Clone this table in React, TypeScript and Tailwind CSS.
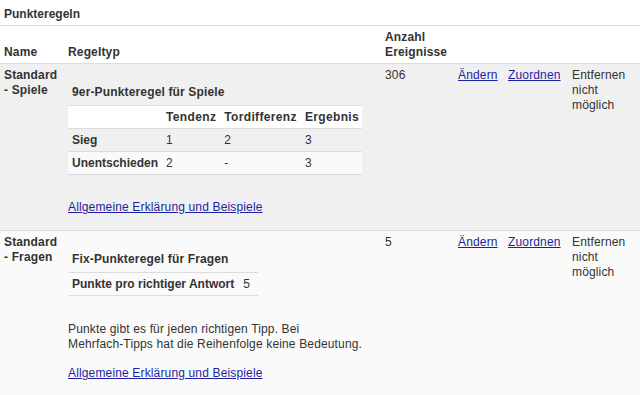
import React from "react";

const linkCls = "text-[#1f1fa3] underline";

type Rule = {
  name: string;
  title: string;
  count: string;
  kind: "spiele" | "fragen";
};

const rules: Rule[] = [
  { name: "Standard - Spiele", title: "9er-Punkteregel für Spiele", count: "306", kind: "spiele" },
  { name: "Standard - Fragen", title: "Fix-Punkteregel für Fragen", count: "5", kind: "fragen" },
];

const SpieleTable = () => (
  <table className="border-collapse">
    <thead>
      <tr className="bg-white border-y border-[#dcdcdc] tracking-[0.35px]">
        <th className="px-1 pt-1 pb-[3px] text-left font-bold"></th>
        <th className="px-1 pt-1 pb-[3px] text-left font-bold">Tendenz</th>
        <th className="px-1 pt-1 pb-[3px] text-left font-bold">Tordifferenz</th>
        <th className="pl-1 pr-[3px] pt-1 pb-[3px] text-left font-bold">Ergebnis</th>
      </tr>
    </thead>
    <tbody>
      <tr className="border-b border-[#dcdcdc]">
        <th className="px-1 pt-1 pb-[3px] text-left font-bold tracking-normal">Sieg</th>
        <td className="px-1 pt-1 pb-[3px]">1</td>
        <td className="px-1 pt-1 pb-[3px]">2</td>
        <td className="px-1 pt-1 pb-[3px]">3</td>
      </tr>
      <tr className="border-b border-[#dcdcdc] bg-[#fafafa]">
        <th className="px-1 pt-1 pb-[3px] text-left font-bold tracking-normal">Unentschieden</th>
        <td className="px-1 pt-1 pb-[3px]">2</td>
        <td className="px-1 pt-1 pb-[3px]">-</td>
        <td className="px-1 pt-1 pb-[3px]">3</td>
      </tr>
    </tbody>
  </table>
);

const FragenTable = () => (
  <table className="border-collapse">
    <tbody>
      <tr className="border-y border-[#dcdcdc]">
        <th className="pl-1 pr-[5px] pt-1 pb-[3px] text-left font-bold tracking-normal">
          Punkte pro richtiger Antwort
        </th>
        <td className="pl-1 pr-2 pt-1 pb-[3px]">5</td>
      </tr>
    </tbody>
  </table>
);

export default function App() {
  return (
    <div className="w-full bg-white font-['Liberation_Sans',Arial,sans-serif] text-[12px] leading-[15px] tracking-[0.15px] text-[#333]">
      <div className="h-[26px] border-b border-[#dcdcdc] px-1 pt-[7px] font-bold tracking-normal">Punkteregeln</div>
      <table className="w-full table-fixed border-collapse">
        <colgroup>
          <col className="w-[64px]" />
          <col className="w-[317px]" />
          <col className="w-[73px]" />
          <col className="w-[50px]" />
          <col className="w-[64px]" />
          <col />
        </colgroup>
        <thead>
          <tr className="border-b border-[#dcdcdc]">
            <th className="px-1 pt-1 pb-[3px] text-left align-bottom font-bold">Name</th>
            <th className="px-1 pt-1 pb-[3px] text-left align-bottom font-bold">Regeltyp</th>
            <th className="px-1 pt-1 pb-[3px] text-left align-bottom font-bold">Anzahl Ereignisse</th>
            <th></th>
            <th></th>
            <th></th>
          </tr>
        </thead>
        <tbody>
          {rules.map((r) => (
            <tr
              key={r.name}
              className={r.kind === "spiele" ? "bg-[#f0f0f0] border-b border-[#dcdcdc]" : "bg-[#fafafa]"}
            >
              <td className="px-1 pt-1 pb-1 align-top font-bold">{r.name}</td>
              <td className="px-1 pt-1 pb-1 align-top">
                <div className="mt-[17px] px-1 pb-[5px] font-bold">{r.title}</div>
                {r.kind === "spiele" ? <SpieleTable /> : <FragenTable />}
                {r.kind === "fragen" && (
                  <p className="mt-[26px]">
                    Punkte gibt es für jeden richtigen Tipp. Bei
                    <br />
                    Mehrfach-Tipps hat die Reihenfolge keine Bedeutung.
                  </p>
                )}
                <p className={r.kind === "spiele" ? "mt-[25px] mb-[11px]" : "mt-[14px] mb-[12px]"}>
                  <a href="#" className={linkCls}>
                    Allgemeine Erklärung und Beispiele
                  </a>
                </p>
              </td>
              <td className="px-1 pt-1 pb-1 align-top">{r.count}</td>
              <td className="px-1 pt-1 pb-1 align-top">
                <a href="#" className={linkCls}>
                  Ändern
                </a>
              </td>
              <td className="px-1 pt-1 pb-1 align-top">
                <a href="#" className={linkCls}>
                  Zuordnen
                </a>
              </td>
              <td className="px-1 pt-1 pb-1 align-top">Entfernen nicht möglich</td>
            </tr>
          ))}
        </tbody>
      </table>
    </div>
  );
}
